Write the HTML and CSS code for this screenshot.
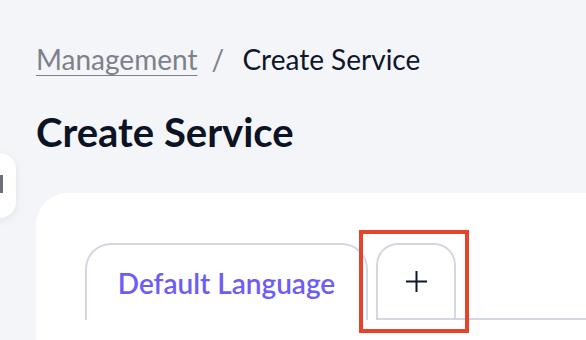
FILE: index.html
```html
<!DOCTYPE html>
<html>
	<head>
		<title>Create Service</title>
		<link rel="stylesheet" href="styles.css">
	</head>
	<body>
		<div class="handle"><span class="grip"></span></div>
		<main>
			<nav class="crumbs">
				<a href="#">Management</a>
				<span class="sep">/</span>
				<span class="here">Create Service</span>
			</nav>
			<h1>Create Service</h1>
			<section class="card">
				<div class="tabs">
					<button type="button" class="tab active">Default Language</button>
					<button type="button" class="tab add">
						<svg width="23" height="23" viewBox="0 0 23 23"><path d="M11.5 1v21M1 11.5h21" stroke="#0f172a" stroke-width="2" fill="none"/></svg>
					</button>
					<span class="rest"></span>
				</div>
			</section>
		</main>
	</body>
</html>
```
FILE: styles.css
```css
html,
body {
	margin: 0;
	background-color: #f4f5f9;
	font-family: Lato, "Open Sans", sans-serif;
	overflow: hidden;
}
main {
	padding: 42px 0 0 36px;
}
.crumbs {
	font-size: 28px;
	line-height: 34px;
	color: #0f172a;
}
.crumbs a {
	color: #7d818b;
	text-decoration: underline;
	text-underline-offset: 5px;
	text-decoration-thickness: 1px;
}
.sep {
	color: #7d818b;
	margin: 0 11px 0 7px;
}
h1 {
	font-size: 40px;
	font-weight: 700;
	color: #0b1324;
	margin: 32px 0 0;
	line-height: 48px;
}
.card {
	margin-top: 37px;
	background: white;
	border-radius: 32px 0 0 0;
	padding: 50px 0 30px 49px;
}
.tabs {
	display: flex;
	align-items: flex-end;
}
.tab {
	font-family: Lato, sans-serif;
	background: white;
	border: 2px solid #d3d7e3;
	border-bottom: none;
	border-radius: 26px 26px 0 0;
	height: 77px;
	padding: 0;
	cursor: pointer;
}
.active {
	width: 283px;
	font-size: 28px;
	font-weight: 600;
	color: #6e5cf6;
}
.add {
	position: relative;
	width: 80px;
	margin-left: 8px;
	border-radius: 22px 22px 0 0;
	border-bottom: 2px solid #d3d7e3;
	display: flex;
	align-items: center;
	justify-content: center;
}
.add::after {
	content: "";
	position: absolute;
	left: -19px;
	top: -15px;
	width: 102px;
	height: 95px;
	border: 4px solid #e5432c;
}
.rest {
	flex: 1;
	border-bottom: 2px solid #d3d7e3;
}
.handle {
	position: absolute;
	left: -20px;
	top: 153px;
	width: 36px;
	height: 65px;
	background: white;
	border-radius: 16px;
	box-shadow: 0 2px 8px rgba(20, 30, 60, 0.08);
}
.grip {
	position: absolute;
	left: 20px;
	top: 22px;
	width: 3px;
	height: 18px;
	background: #6b6f78;
}
```
